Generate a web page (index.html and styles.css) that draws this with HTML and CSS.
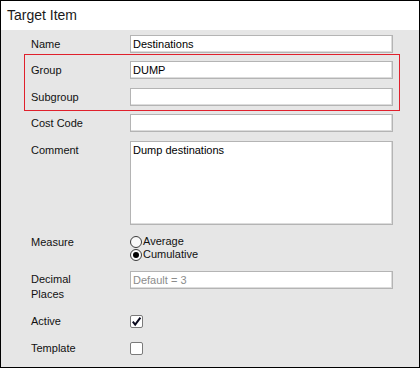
FILE: index.html
```html
<!DOCTYPE html>
<html lang="en">
<head>
    <meta charset="UTF-8">
    <title>Target Item</title>
    <link rel="stylesheet" href="styles.css">
</head>
<body>
    <div class="panel">
        <div class="panel-title">Target Item</div>
        <form class="item-form">
            <!-- Name -->
            <div class="form-row row-name">
                <label for="name">Name</label>
                <input type="text" id="name" value="Destinations">
            </div>

            <!-- Group / Subgroup (highlighted) -->
            <div class="highlight">
                <div class="form-row row-group">
                    <label for="group">Group</label>
                    <input type="text" id="group" value="DUMP">
                </div>
                <div class="form-row row-subgroup">
                    <label for="subgroup">Subgroup</label>
                    <input type="text" id="subgroup">
                </div>
            </div>

            <!-- Cost Code -->
            <div class="form-row row-cost">
                <label for="cost">Cost Code</label>
                <input type="text" id="cost">
            </div>

            <!-- Comment -->
            <div class="form-row row-comment">
                <label for="comment">Comment</label>
                <textarea id="comment">Dump destinations</textarea>
            </div>

            <!-- Measure -->
            <div class="form-row row-measure">
                <label>Measure</label>
                <div class="radio-list">
                    <label class="radio"><input type="radio" name="measure">Average</label>
                    <label class="radio"><input type="radio" name="measure" checked>Cumulative</label>
                </div>
            </div>

            <!-- Decimal Places -->
            <div class="form-row row-decimal">
                <label for="decimals" class="two-line">Decimal<br>Places</label>
                <input type="text" id="decimals" placeholder="Default = 3">
            </div>

            <!-- Active -->
            <div class="form-row row-active">
                <label>Active</label>
                <span class="check">
                    <svg width="11" height="11" viewBox="0 0 11 11">
                        <path d="M1.8 5.6 L4.2 8.6 L9.4 1.6" fill="none" stroke="#0a0a1e" stroke-width="2"/>
                    </svg>
                </span>
            </div>

            <!-- Template -->
            <div class="form-row row-template">
                <label>Template</label>
                <span class="check"></span>
            </div>
        </form>
    </div>
</body>
</html>
```

FILE: styles.css
```css
/* page */
body {
    margin: 0;
    background: #fff;
    font-family: "Liberation Sans", Arial, sans-serif;
    font-size: 11px;
    color: #111;
}

/* outer panel */
.panel {
    width: 420px;
    height: 368px;
    box-sizing: border-box;
    border: 1px solid #000;
    background: #e6e6e6;
}
.panel-title {
    height: 29px;
    line-height: 28px;
    padding-left: 6px;
    background: #fff;
    font-size: 14px;
    color: #1a1a1a;
}

/* form */
.item-form {
    padding: 5px 26px 0 30px;
}
.form-row {
    display: flex;
    align-items: flex-start;
    margin-bottom: 9px;
}
.form-row > label {
    width: 99px;
    flex: none;
    line-height: 18px;
}
.form-row > label.two-line {
    line-height: 15px;
    padding-top: 1px;
}
input[type="text"],
textarea {
    flex: 1;
    height: 18px;
    box-sizing: border-box;
    margin: 0;
    padding: 0 2px;
    border: 1px solid #b4b4b4;
    box-shadow: inset -1px -1px 0 #dcdcdc;
    background: #fff;
    font-family: inherit;
    font-size: 11px;
    color: #000;
    outline: none;
}
input::placeholder {
    color: #8c8c8c;
}
textarea {
    height: 84px;
    padding-top: 2px;
    resize: none;
}

.row-name { margin-bottom: 1px; }
.row-group { margin-bottom: 9px; }
.row-subgroup { margin-bottom: 0; }
.row-comment { margin-bottom: 10px; }
.row-measure { margin-bottom: 10px; }
.row-decimal { margin-bottom: 13px; }
.row-active { margin-bottom: 14px; }

/* red highlight around group fields */
.highlight {
    margin: 0 -7px 3px -7px;
    padding: 6px 6px 4px 6px;
    border: 1px solid #e0202c;
}

/* radios */
.radio-list {
    display: flex;
    flex-direction: column;
}
.radio {
    display: flex;
    align-items: center;
    height: 13px;
    line-height: 13px;
}
.radio input {
    appearance: none;
    -webkit-appearance: none;
    width: 12px;
    height: 12px;
    margin: 0 1px 0 0;
    border: 1px solid #3c3c3c;
    border-radius: 50%;
    background: #fafafa;
    box-sizing: border-box;
    position: relative;
}
.radio input:checked::after {
    content: "";
    position: absolute;
    left: 2px;
    top: 2px;
    width: 6px;
    height: 6px;
    border-radius: 50%;
    background: #000;
}
.row-measure > label {
    line-height: 13px;
    margin-top: 1px;
}

/* checkboxes */
.check {
    width: 13px;
    height: 13px;
    box-sizing: border-box;
    border: 1px solid #7a7a7a;
    border-radius: 2px;
    background: #fff;
    display: flex;
    align-items: center;
    justify-content: center;
}
.row-active > label,
.row-template > label {
    line-height: 13px;
}
```
